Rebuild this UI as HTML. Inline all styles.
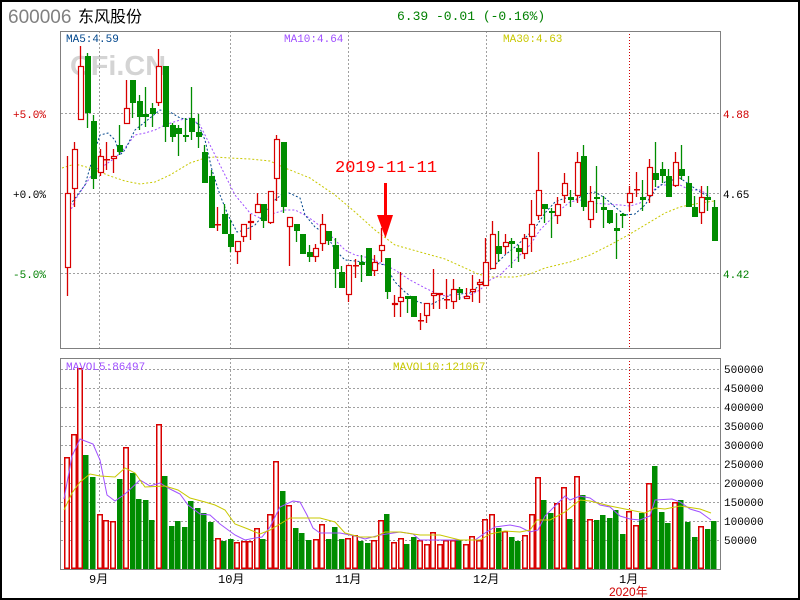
<!DOCTYPE html>
<html><head><meta charset="utf-8">
<style>
html,body{margin:0;padding:0;background:#fff;}
body{width:800px;height:600px;overflow:hidden;position:relative;}
svg{position:absolute;left:0;top:0;}
text{font-family:"Liberation Mono","Noto Sans CJK SC",monospace;}
</style></head><body>
<svg id="s" width="800" height="600" viewBox="0 0 800 600" xmlns="http://www.w3.org/2000/svg">
<rect x="1" y="1" width="798" height="598" fill="#fff" stroke="#000" stroke-width="2"/>
<text x="8" y="23" font-size="19" fill="#808080" style="font-family:'Liberation Sans',sans-serif">600006</text>
<text x="78" y="22" font-size="16" fill="#000" style="font-family:'Liberation Sans','Noto Sans CJK SC',sans-serif">东风股份</text>
<text x="397" y="20" font-size="13" fill="#008000">6.39 -0.01 (-0.16%)</text>
<text x="70" y="75" font-size="28" font-weight="bold" fill="#d4d4d4" style="font-family:'Liberation Sans',sans-serif" textLength="96" lengthAdjust="spacingAndGlyphs">CFi.CN</text>
<g id="grid" stroke="#a0a0a0" stroke-dasharray="2,2" stroke-width="1" fill="none">
<line x1="61" y1="113.5" x2="720" y2="113.5"/><line x1="61" y1="193.5" x2="720" y2="193.5"/><line x1="61" y1="273.5" x2="720" y2="273.5"/>
<line x1="99.5" y1="31" x2="99.5" y2="348"/><line x1="230.5" y1="31" x2="230.5" y2="348"/><line x1="348.5" y1="31" x2="348.5" y2="348"/><line x1="486.5" y1="31" x2="486.5" y2="348"/>
<line x1="99.5" y1="358" x2="99.5" y2="569"/><line x1="230.5" y1="358" x2="230.5" y2="569"/><line x1="348.5" y1="358" x2="348.5" y2="569"/><line x1="486.5" y1="358" x2="486.5" y2="569"/>
<line x1="61" y1="369.5" x2="720" y2="369.5"/><line x1="61" y1="388.5" x2="720" y2="388.5"/><line x1="61" y1="407.5" x2="720" y2="407.5"/><line x1="61" y1="426.5" x2="720" y2="426.5"/><line x1="61" y1="445.5" x2="720" y2="445.5"/><line x1="61" y1="464.5" x2="720" y2="464.5"/><line x1="61" y1="483.5" x2="720" y2="483.5"/><line x1="61" y1="502.5" x2="720" y2="502.5"/><line x1="61" y1="521.5" x2="720" y2="521.5"/><line x1="61" y1="540.5" x2="720" y2="540.5"/>
</g>
<g stroke="#d00000" stroke-dasharray="1,2" stroke-width="1"><line x1="629.5" y1="31" x2="629.5" y2="348"/><line x1="629.5" y1="358" x2="629.5" y2="569"/></g>
<g id="cd"></g>
<rect x="60.5" y="31.5" width="660" height="317" fill="none" stroke="#808080" stroke-width="1"/>
<rect x="60.5" y="358.5" width="660" height="211" fill="none" stroke="#808080" stroke-width="1"/>
<text x="66" y="42" font-size="11" fill="#00468c">MA5:4.59</text>
<text x="284" y="42" font-size="11" fill="#a050ff">MA10:4.64</text>
<text x="503" y="42" font-size="11" fill="#c8c800">MA30:4.63</text>
<text x="66" y="370" font-size="11" fill="#a050ff">MAVOL5:86497</text>
<text x="393" y="370" font-size="11" fill="#c8c800">MAVOL10:121067</text>
<text x="13" y="118" font-size="11" fill="#d00000">+5.0%</text>
<text x="13" y="198" font-size="11" fill="#000">+0.0%</text>
<text x="13" y="278" font-size="11" fill="#008000">-5.0%</text>
<text x="723" y="118" font-size="11" fill="#d00000">4.88</text>
<text x="723" y="198" font-size="11" fill="#000">4.65</text>
<text x="723" y="278" font-size="11" fill="#008000">4.42</text>
<g font-size="11" fill="#000">
<text x="724" y="373">500000</text><text x="724" y="392">450000</text><text x="724" y="411">400000</text><text x="724" y="430">350000</text><text x="724" y="449">300000</text><text x="724" y="468">250000</text><text x="724" y="487">200000</text><text x="724" y="506">150000</text><text x="724" y="525">100000</text><text x="724" y="544">50000</text>
</g>
<g font-size="12" fill="#000" style="font-family:'Liberation Sans','Noto Sans CJK SC',sans-serif">
<text x="89" y="583">9月</text><text x="218" y="583">10月</text><text x="335" y="583">11月</text><text x="473" y="583">12月</text><text x="619" y="583">1月</text>
</g>
<text x="609" y="596" font-size="12" fill="#d00000" style="font-family:'Liberation Sans','Noto Sans CJK SC',sans-serif">2020年</text>
<text x="335" y="172" font-size="17" fill="#ff0000">2019-11-11</text>
<rect x="384" y="183" width="3" height="34" fill="#ff0000"/>
<polygon points="377,215 393,215 385.5,238" fill="#ff0000"/>
</svg>
<script>
var C=[[193,268,156,296,'r'],[149,189,142,207,'r'],[66,120,46,120,'r'],[56,113,53,128,'g'],[121,179,115,189,'g'],[156,173,149,176,'r'],[159,160,142,170,'r'],[156,159,149,173,'r'],[145,152,125,155,'g'],[108,124,80,124,'r'],
[80,103,80,118,'g'],[101,117,95,130,'g'],[114,117,87,127,'g'],[108,114,103,127,'g'],[66,103,49,106,'r'],[66,127,66,142,'g'],[125,137,123,142,'g'],[128,134,125,156,'g'],[135,137,118,142,'g'],[118,132,87,140,'g'],
[132,137,114,148,'g'],[152,183,145,183,'g'],[176,228,170,228,'g'],[224,224,207,231,'r'],[214,234,204,234,'g'],[234,247,220,252,'g'],[241,252,241,264,'r'],[224,237,224,242,'r'],[221,223,214,240,'r'],[204,213,193,213,'r'],
[204,221,204,228,'g'],[191,223,191,224,'r'],[139,179,135,201,'r'],[142,207,142,213,'g'],[217,227,217,266,'r'],[224,231,224,242,'g'],[234,254,234,254,'g'],[252,257,245,262,'g'],[248,257,244,262,'r'],[224,244,214,251,'r'],
[231,241,231,245,'g'],[245,269,238,288,'g'],[272,288,266,288,'g'],[265,295,265,302,'r'],[265,265,259,278,'r'],[262,265,255,282,'g'],[248,276,248,276,'g'],[262,271,255,276,'r'],[245,251,228,262,'r'],[258,292,258,299,'g'],
[303,305,295,317,'r'],[297,302,272,317,'r'],[296,299,296,313,'g'],[296,317,296,317,'g'],[320,320,313,330,'r'],[303,316,303,323,'r'],[293,296,269,309,'r'],[293,295,293,309,'r'],[299,299,279,309,'r'],[289,302,279,309,'r'],
[289,293,287,300,'g'],[296,299,288,299,'r'],[289,292,275,302,'r'],[282,285,279,303,'r'],[262,286,238,286,'r'],[234,269,221,269,'r'],[246,254,231,262,'g'],[242,247,234,254,'r'],[241,244,238,268,'g'],[248,252,245,262,'g'],
[238,254,234,259,'r'],[224,237,200,252,'r'],[190,216,152,220,'r'],[204,209,204,223,'g'],[211,213,208,238,'g'],[204,216,197,224,'r'],[183,196,173,203,'r'],[197,200,190,207,'g'],[162,196,152,203,'r'],[156,207,145,211,'g'],
[201,220,186,228,'r'],[197,199,166,213,'g'],[207,210,196,228,'g'],[210,223,210,224,'g'],[228,231,213,259,'g'],[214,216,213,228,'g'],[193,203,186,211,'r'],[189,189,172,197,'r'],[197,200,180,211,'g'],[167,196,159,203,'r'],
[173,180,142,187,'g'],[169,176,162,183,'g'],[176,197,169,197,'g'],[162,186,152,187,'r'],[169,176,145,180,'g'],[183,207,176,207,'g'],[207,217,196,217,'g'],[197,213,186,224,'r'],[197,200,186,211,'g'],[207,241,200,241,'g']];
var V=[[64,457,'r'],[71,434,'r'],[77,368,'r'],[83,455,'g'],[90,477,'g'],[97,514,'r'],[103,520,'r'],[110,521,'r'],[117,479,'g'],[123,447,'r'],[130,473,'g'],[136,499,'g'],[143,500,'g'],[149,520,'g'],[156,424,'r'],[162,476,'g'],[169,526,'g'],[175,521,'g'],[182,527,'g'],[188,501,'g'],[195,508,'g'],[201,513,'g'],[208,522,'g'],[215,538,'r'],[221,541,'g'],[228,539,'g'],[234,542,'r'],[241,541,'r'],[247,541,'r'],[254,528,'r'],[260,539,'g'],[267,514,'r'],[273,461,'r'],[280,491,'g'],[286,505,'r'],[293,528,'g'],[299,533,'g'],[306,540,'g'],[313,539,'r'],[319,524,'r'],[326,539,'g'],[332,527,'g'],[339,539,'g'],[345,538,'r'],[352,535,'r'],[358,541,'g'],[365,543,'g'],[371,540,'r'],[378,520,'r'],[384,514,'g'],[391,542,'r'],[398,538,'r'],
[404,544,'g'],[411,537,'g'],[417,540,'r'],[424,544,'r'],[430,532,'r'],[437,544,'r'],[443,540,'r'],[450,540,'r'],[456,540,'g'],[463,544,'r'],[469,536,'r'],[476,540,'r'],[482,519,'r'],[489,514,'r'],[496,528,'g'],[502,531,'r'],[509,537,'g'],[515,541,'g'],[522,535,'r'],[529,514,'r'],[535,477,'r'],[541,500,'g'],[548,513,'g'],[554,503,'r'],[561,487,'r'],[567,519,'g'],[574,476,'r'],[580,495,'g'],[587,519,'r'],[594,520,'g'],[600,515,'g'],[607,518,'g'],[613,510,'g'],[620,534,'g'],[626,511,'r'],[633,525,'r'],[639,513,'g'],[646,483,'r'],[652,466,'g'],[659,512,'g'],[665,523,'g'],[672,502,'r'],[678,500,'g'],[685,522,'g'],[692,537,'g'],[698,526,'r'],[705,529,'g'],[711,521,'g']];
var RED='#d80000',GRN='#008c00';
var h='';
function pl(p,c,d){return '<polyline fill="none" stroke="'+c+'" stroke-width="1" '+(d?'stroke-dasharray="'+d+'" ':'')+'points="'+p+'"/>';}
V.forEach(function(v){var x=v[0],y=v[1];if(v[2]=='g')h+='<rect x="'+x+'" y="'+y+'" width="5.5" height="'+(569-y)+'" fill="'+GRN+'"/>';else h+='<rect x="'+(x+0.75)+'" y="'+(y+0.75)+'" width="4.5" height="'+(567.5-y)+'" fill="#fff" stroke="'+RED+'" stroke-width="1.5"/>';});
h+=pl('64,499 72,456 80,439 93,444 100,460 107,495 115,501 125,494 140,480 150,486 160,483 170,489 180,494 188,505 200,514 210,515 220,524 235,535 245,540 255,538 262,537 270,527 280,507 293,501 300,502 307,515 313,528 320,533 340,533 355,536 365,539 380,535 400,532 413,534 420,540 475,540 485,533 495,527 510,525 520,527 530,532 538,530 545,516 555,506 565,496 570,500 580,496 590,498 600,505 610,507 620,516 630,519 640,520 650,516 655,500 672,499 680,502 690,509 700,512 711,520','#a050ff');
h+=pl('64,510 72,493 80,482 90,474 100,476 115,477 125,468 135,473 145,487 165,486 178,490 190,498 205,502 215,505 225,510 235,524 248,529 260,534 270,530 280,524 290,518 320,518 335,522 345,533 360,537 375,537 385,532 400,532 420,535 440,535 460,540 480,540 490,534 505,531 520,532 530,530 537,520 550,520 565,512 580,500 590,501 610,506 630,510 645,513 655,508 665,509 680,506 700,509 711,513','#c8c800');
h+=pl('62,168 75,164 90,168 100,172 110,176 125,181 140,184 155,182 170,175 190,163 205,158 215,157 230,158 250,159 270,161 285,168 310,178 335,195 355,212 375,230 395,245 420,252 445,259 465,268 478,274 490,277 515,277 530,274 545,268 570,262 590,255 610,245 630,234 650,222 665,213 680,207 695,204 714,201','#c8c800','2,2');
h+=pl('67,220 75,200 85,185 95,170 105,165 115,158 125,148 135,135 145,133 155,130 165,125 180,120 190,118 200,125 210,145 220,165 235,195 250,213 260,218 275,213 285,210 295,210 305,215 315,222 325,230 335,240 345,250 355,255 370,258 385,265 395,270 410,280 425,288 440,295 460,298 470,295 480,290 490,280 500,275 510,265 520,255 530,245 540,230 550,220 560,210 570,202 580,200 590,203 620,205 630,206 640,203 650,193 660,185 680,185 690,190 700,190 710,196','#a050ff','2,2');
h+=pl('70,205 85,185 95,150 100,135 108,133 115,140 120,155 125,150 135,130 145,122 160,110 170,112 180,118 190,120 198,124 205,140 212,170 220,195 228,215 237,232 245,230 255,225 265,213 275,200 281,195 289,193 300,198 305,215 315,227 327,235 335,250 345,260 375,263 385,265 395,282 405,292 418,302 430,305 440,300 450,295 470,293 480,285 490,270 495,265 505,255 515,247 525,238 535,228 545,213 555,202 565,198 575,200 585,194 595,192 605,198 615,207 625,215 635,214 645,205 655,190 665,182 680,178 690,185 700,192 710,197','#00468c','2,2');
C.forEach(function(c,i){var x=Math.round(67+i*6.535);var col=c[4]=='g'?GRN:RED;
h+='<line x1="'+(x+0.5)+'" y1="'+c[2]+'" x2="'+(x+0.5)+'" y2="'+c[3]+'" stroke="'+col+'" stroke-width="1.3"/>';
var t=c[0],b=c[1];
if(c[4]=='g')h+='<rect x="'+(x-2)+'" y="'+t+'" width="6" height="'+Math.max(2,b-t)+'" fill="'+GRN+'"/>';
else{if(b-t<2)h+='<rect x="'+(x-2)+'" y="'+t+'" width="6" height="1.5" fill="'+RED+'"/>';else h+='<rect x="'+(x-1.5)+'" y="'+(t+0.5)+'" width="5" height="'+(b-t-1)+'" fill="#fff" stroke="'+RED+'" stroke-width="1.2"/>';}
});
document.getElementById('cd').innerHTML=h;
</script>
</body></html>
